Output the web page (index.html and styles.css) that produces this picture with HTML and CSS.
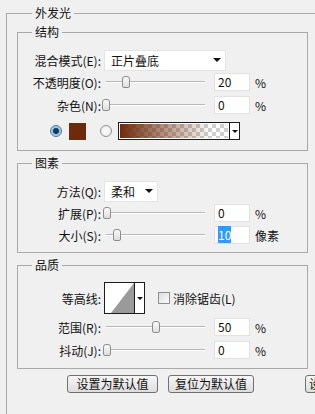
FILE: index.html
```html
<!DOCTYPE html>
<html lang="zh-CN">
<head>
  <meta charset="UTF-8">
  <meta name="viewport" content="width=device-width,initial-scale=1.0">
  <title>外发光</title>
  <link rel="stylesheet" href="styles.css">
</head>
<body>
  <fieldset class="panel">
    <legend>外发光</legend>

    <fieldset class="group group-structure">
      <legend>结构</legend>
      <div class="row">
        <span class="lbl">混合模式(E):</span>
        <div class="select select-blend"><span>正片叠底</span><i class="caret"></i></div>
      </div>
      <div class="row">
        <span class="lbl">不透明度(O):</span>
        <div class="slider"><div class="track"><span class="thumb" style="left:20%"></span></div></div>
        <span class="num">20</span><span class="unit">%</span>
      </div>
      <div class="row row-noise">
        <span class="lbl">杂色(N):</span>
        <div class="slider"><div class="track"><span class="thumb" style="left:0%"></span></div></div>
        <span class="num">0</span><span class="unit">%</span>
      </div>
      <div class="row row-color">
        <span class="radio checked"></span>
        <span class="swatch"></span>
        <span class="radio"></span>
        <div class="gradient"><span class="gradient-fill"></span><span class="gradient-btn"><i class="caret"></i></span></div>
      </div>
    </fieldset>

    <fieldset class="group group-elements">
      <legend>图素</legend>
      <div class="row">
        <span class="lbl">方法(Q):</span>
        <div class="select select-method"><span>柔和</span><i class="caret"></i></div>
      </div>
      <div class="row">
        <span class="lbl">扩展(P):</span>
        <div class="slider"><div class="track"><span class="thumb" style="left:1%"></span></div></div>
        <span class="num">0</span><span class="unit">%</span>
      </div>
      <div class="row">
        <span class="lbl">大小(S):</span>
        <div class="slider"><div class="track"><span class="thumb" style="left:11%"></span></div></div>
        <span class="num"><span class="sel">10</span></span><span class="unit">像素</span>
      </div>
    </fieldset>

    <fieldset class="group group-quality">
      <legend>品质</legend>
      <div class="row row-contour">
        <span class="lbl">等高线:</span>
        <div class="contour">
          <svg class="contour-icon" width="29" height="30" viewBox="0 0 29 30">
            <rect x="0" y="0" width="29" height="30" fill="#fff"/>
            <polygon points="6,30 29,0 29,30" fill="#9a9a9a"/>
          </svg>
          <span class="contour-btn"><i class="caret"></i></span>
        </div>
        <span class="check"></span>
        <span class="check-lbl">消除锯齿(L)</span>
      </div>
      <div class="row row-range">
        <span class="lbl">范围(R):</span>
        <div class="slider"><div class="track"><span class="thumb" style="left:50%"></span></div></div>
        <span class="num">50</span><span class="unit">%</span>
      </div>
      <div class="row row-jitter">
        <span class="lbl">抖动(J):</span>
        <div class="slider"><div class="track"><span class="thumb" style="left:1%"></span></div></div>
        <span class="num">0</span><span class="unit">%</span>
      </div>
    </fieldset>

    <div class="buttons">
      <button class="btn btn-set">设置为默认值</button>
      <button class="btn btn-reset">复位为默认值</button>
      <button class="btn btn-more">设置</button>
    </div>
  </fieldset>
</body>
</html>
```

FILE: styles.css
```css
html, body {
  margin: 0;
  height: 414px;
  overflow: hidden;
}

body {
  background: #f0f0f0;
  color: #111;
  font-family: "Noto Sans CJK SC", "Liberation Sans", sans-serif;
  font-size: 12px;
}

fieldset {
  margin: 0;
  padding: 0;
  min-width: 0;
  border: 1px solid #a9a9a9;
}

legend {
  margin-left: 15px;
  padding: 0 3px;
  font-size: 12px;
  line-height: 16px;
}

/* outer panel, runs off the right and bottom edge */
.panel {
  margin: 5px 0 0 6px;
  width: 340px;
  height: 440px;
  box-sizing: border-box;
  padding: 0 0 0 10px;
  border-right: none;
}

.group {
  width: 291px;
  box-sizing: border-box;
  margin-top: 4px;
}
.group legend { margin-left: 14px; }
.group-structure { margin-top: 3px; padding: 9px 0 8px; }
.group-elements  { padding: 9px 0 6px; }
.group-quality   { padding: 9px 0 7px; }

.row {
  display: flex;
  align-items: center;
  height: 22px;
}
.row-noise  { margin-top: 1px; }
.row-color  { margin-top: 4px; }
.row-contour { height: 32px; }
.row-range  { margin-top: 2px; }
.row-jitter { margin-top: 1px; }

.lbl {
  width: 83px;
  flex: none;
  text-align: right;
  white-space: nowrap;
}

/* dropdowns */
.select {
  margin-left: 3px;
  height: 21px;
  box-sizing: border-box;
  background: #fff;
  border: 1px solid #e4e4e4;
  display: flex;
  align-items: center;
  justify-content: space-between;
  padding: 0 4px 0 6px;
}
.select-blend  { width: 122px; }
.select-method { width: 54px; }

.caret {
  width: 0;
  height: 0;
  border-left: 4px solid transparent;
  border-right: 4px solid transparent;
  border-top: 4px solid #111;
}

/* sliders */
.slider {
  margin-left: 3px;
  width: 103px;
  height: 14px;
  display: flex;
  align-items: center;
}
.track {
  position: relative;
  width: 99px;
  height: 1px;
  margin: 0 2px;
  background: #b8b8b8;
  border-bottom: 1px solid #fff;
}
.thumb {
  position: absolute;
  top: -5px;
  margin-left: -4px;
  width: 6px;
  height: 10px;
  border: 1px solid #8d8d8d;
  border-radius: 3px 3px 2px 2px;
  background: linear-gradient(#fafafa, #dedede);
}

.num {
  margin-left: 7px;
  width: 36px;
  height: 18px;
  box-sizing: border-box;
  background: #fff;
  border: 1px solid #e2e2e2;
  padding-left: 3px;
  line-height: 16px;
}
.sel {
  background: #3399ff;
  color: #fff;
}
.unit { margin-left: 5px; }

/* colour row */
.radio {
  width: 12px;
  height: 12px;
  box-sizing: border-box;
  border-radius: 50%;
  border: 1px solid #8f8f8f;
  background: radial-gradient(circle, #fff 0, #e6e6e6 100%);
}
.radio:first-child { margin-left: 32px; }
.radio.checked {
  border-color: #4f7596;
  background: radial-gradient(circle, #0f3b60 0, #0f3b60 2.5px, #8fc1e3 3.5px, #dcecf7 100%);
}
.swatch {
  margin: 0 14px 0 7px;
  width: 17px;
  height: 17px;
  background: #6e2b0c;
}
.gradient {
  margin-left: 6px;
  width: 122px;
  height: 18px;
  box-sizing: border-box;
  border: 1px solid #1c1c1c;
  display: flex;
}
.gradient-fill {
  flex: 1;
  border: 1px solid #fff;
  background:
    linear-gradient(to right, #6e2b0c, rgba(110, 43, 12, 0) 85%),
    repeating-conic-gradient(#cfcfcf 0 25%, #fff 0 50%) 0 0 / 8px 8px;
}
.gradient-btn {
  width: 9px;
  border-left: 1px solid #1c1c1c;
  background: #fff;
  display: flex;
  align-items: center;
  justify-content: center;
}
.gradient-btn .caret,
.contour-btn .caret {
  border-left-width: 3px;
  border-right-width: 3px;
  border-top-width: 3px;
}

/* contour */
.contour {
  margin-left: 3px;
  width: 41px;
  height: 32px;
  box-sizing: border-box;
  border: 1px solid #1c1c1c;
  display: flex;
  background: #fff;
}
.contour-icon { display: block; }
.contour-btn {
  flex: 1;
  border-left: 1px solid #1c1c1c;
  display: flex;
  align-items: center;
  justify-content: center;
}
.check {
  margin-left: 13px;
  width: 12px;
  height: 12px;
  box-sizing: border-box;
  border: 1px solid #8f8f8f;
  background: linear-gradient(135deg, #dcdcdc, #fbfbfb);
}
.check-lbl { margin-left: 3px; }

/* bottom buttons */
.buttons {
  display: flex;
  margin-top: 6px;
  padding-left: 50px;
}
.btn {
  flex: none;
  height: 18px;
  padding: 0;
  border: 1px solid #707070;
  border-radius: 3px;
  background: linear-gradient(#f7f7f7, #dddddd);
  font-family: inherit;
  font-size: 12px;
  line-height: 16px;
  color: #111;
}
.btn-set   { width: 91px; }
.btn-reset { width: 86px; margin-left: 10px; }
.btn-more  { width: 60px; margin-left: 51px; text-align: left; padding-left: 3px; }
```
